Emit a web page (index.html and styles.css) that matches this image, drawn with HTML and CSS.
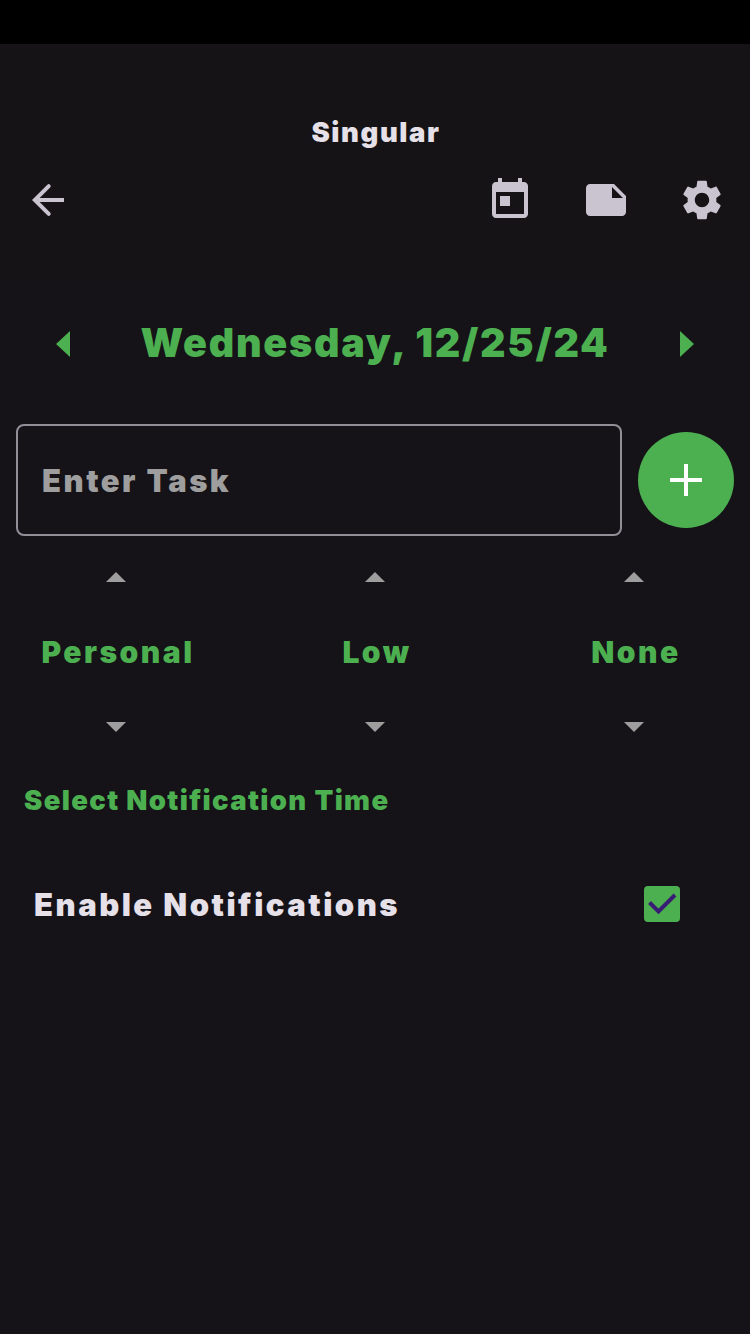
FILE: index.html
```html
<!DOCTYPE html>
<html lang="en">
<head>
<meta charset="utf-8">
<title>Singular</title>
<link rel="stylesheet" href="styles.css">
</head>
<body>
<div class="status-bar"></div>
<header class="app-bar">
  <h1 class="title">Singular</h1>
  <nav class="toolbar">
    <svg class="icon back" viewBox="0 0 24 24"><path d="M20 11H7.83l5.24-5.24a.99.99 0 0 0-1.4-1.4L4 12l7.67 7.64a.99.99 0 0 0 1.4-1.4L7.83 13H20z"/></svg>
    <svg class="icon" viewBox="0 0 24 24"><path d="M19 3h-1V1h-2v2H8V1H6v2H5c-1.11 0-1.99.9-1.99 2L3 19c0 1.1.89 2 2 2h14c1.1 0 2-.9 2-2V5c0-1.1-.9-2-2-2zm0 16H5V8h14v11zM7 10h5v5H7z"/></svg>
    <svg class="icon" viewBox="0 0 24 24"><path d="M22 10l-6-6H4c-1.1 0-2 .9-2 2v12.01c0 1.1.9 1.99 2 1.99l16-.01c1.1 0 2-.89 2-1.99v-8zm-7-4.5l5.5 5.5H15V5.5z"/></svg>
    <svg class="icon" viewBox="0 0 24 24"><path d="M19.14 12.94c.04-.3.06-.61.06-.94 0-.32-.02-.64-.07-.94l2.03-1.58c.18-.14.23-.41.12-.61l-1.92-3.32c-.12-.22-.37-.29-.59-.22l-2.39.96c-.5-.38-1.03-.7-1.62-.94l-.36-2.54c-.04-.24-.24-.41-.48-.41h-3.84c-.24 0-.43.17-.47.41l-.36 2.54c-.59.24-1.13.57-1.62.94l-2.39-.96c-.22-.08-.47 0-.59.22L2.74 8.87c-.12.21-.08.47.12.61l2.03 1.58c-.05.3-.09.63-.09.94s.02.64.07.94l-2.03 1.58c-.18.14-.23.41-.12.61l1.92 3.32c.12.22.37.29.59.22l2.39-.96c.5.38 1.03.7 1.62.94l.36 2.54c.05.24.24.41.48.41h3.84c.24 0 .44-.17.47-.41l.36-2.54c.59-.24 1.13-.56 1.62-.94l2.39.96c.22.08.47 0 .59-.22l1.92-3.32c.12-.22.07-.47-.12-.61l-2.01-1.58zM12 15.6c-1.98 0-3.6-1.62-3.6-3.6s1.62-3.6 3.6-3.6 3.6 1.62 3.6 3.6-1.62 3.6-3.6 3.6z"/></svg>
  </nav>
</header>
<main>
  <section class="date-row">
    <svg class="date-arrow" viewBox="0 0 14 26"><path d="M14 0v26L0 13z"/></svg>
    <h2 class="date">Wednesday, 12/25/24</h2>
    <svg class="date-arrow" viewBox="0 0 14 26"><path d="M0 0v26l14-13z"/></svg>
  </section>
  <section class="task-row">
    <div class="task-field">Enter Task</div>
    <div class="add"><svg class="plus" viewBox="0 0 34 34"><path d="M15 1h4v14h14v4H19v14h-4V19H1v-4h14z"/></svg></div>
  </section>
  <section class="pickers">
    <div class="picker">
      <svg class="caret" viewBox="0 0 20 10"><path d="M0 10L10 0l10 10z"/></svg>
      <span class="value">Personal</span>
      <svg class="caret" viewBox="0 0 20 10"><path d="M0 0h20L10 10z"/></svg>
    </div>
    <div class="picker">
      <svg class="caret" viewBox="0 0 20 10"><path d="M0 10L10 0l10 10z"/></svg>
      <span class="value">Low</span>
      <svg class="caret" viewBox="0 0 20 10"><path d="M0 0h20L10 10z"/></svg>
    </div>
    <div class="picker">
      <svg class="caret" viewBox="0 0 20 10"><path d="M0 10L10 0l10 10z"/></svg>
      <span class="value">None</span>
      <svg class="caret" viewBox="0 0 20 10"><path d="M0 0h20L10 10z"/></svg>
    </div>
  </section>
  <div class="select-time">Select Notification Time</div>
  <div class="enable-row">
    <span class="enable-label">Enable Notifications</span>
    <svg class="checkbox" viewBox="0 0 36 36"><rect width="36" height="36" rx="4"/><path d="M5.5 16.5l9 9L31 9"/></svg>
  </div>
</main>
</body>
</html>
```
FILE: styles.css
```css
* { box-sizing: border-box; }
body {
  margin: 0;
  height: 1334px;
  background: #151218;
  font-family: Inter, "Liberation Sans", sans-serif;
  font-weight: 900;
  overflow: hidden;
}
svg { display: block; flex: none; }
.status-bar { height: 44px; background: #000; }
.app-bar {
  height: 236px;
  padding-top: 68px;
  background: #151316;
}
.title {
  margin: 0;
  font-size: 27.5px;
  line-height: 41px;
  height: 40px;
  font-weight: 900;
  letter-spacing: 1.6px;
  padding-left: 2px;
  text-align: center;
  color: #e6e0e9;
}
.toolbar {
  display: flex;
  gap: 48px;
  padding: 24px 24px 0;
}
.icon { width: 48px; height: 48px; fill: #cac4d0; }
.back { margin-right: auto; }
.date-row {
  height: 128px;
  display: flex;
  align-items: center;
  justify-content: space-between;
  padding: 0 56px;
}
.date-arrow { width: 14px; height: 26px; fill: #4caf50; }
.date {
  margin: 0;
  font-size: 39.5px;
  line-height: 48px;
  padding-bottom: 2px;
  font-weight: 900;
  letter-spacing: 1.75px;
  color: #4caf50;
}
.task-row {
  display: flex;
  align-items: center;
  gap: 16px;
  padding: 16px 16px 0;
}
.task-field {
  flex: 1;
  height: 112px;
  border: 2px solid #938f99;
  border-radius: 8px;
  padding-left: 24px;
  font-size: 31px;
  line-height: 110px;
  letter-spacing: 2.5px;
  color: #9e9e9e;
}
.add {
  width: 96px;
  height: 96px;
  border-radius: 50%;
  background: #4caf50;
  display: grid;
  place-items: center;
}
.plus { width: 34px; height: 34px; fill: #fff; }
.pickers {
  display: flex;
  justify-content: space-between;
  padding: 36px 16px 0;
}
.picker {
  width: 200px;
  display: flex;
  flex-direction: column;
  align-items: center;
}
.caret { width: 20px; height: 10px; fill: #9e9e9e; }
.value {
  font-size: 30px;
  line-height: 40px;
  margin: 50px 0;
  padding-left: 4px;
  letter-spacing: 2.5px;
  color: #4caf50;
}
.select-time {
  margin: 48px 0 0 24px;
  font-size: 27.5px;
  line-height: 41px;
  height: 40px;
  letter-spacing: 1.35px;
  color: #4caf50;
}
.enable-row {
  display: flex;
  align-items: center;
  justify-content: space-between;
  margin-top: 64px;
  padding: 0 70px 0 34px;
}
.enable-label {
  font-size: 31px;
  line-height: 42px;
  height: 40px;
  letter-spacing: 2.5px;
  color: #e6e0e9;
}
.checkbox { width: 36px; height: 36px; }
.checkbox rect { fill: #4caf50; }
.checkbox path { fill: none; stroke: #381e72; stroke-width: 4; }
```
